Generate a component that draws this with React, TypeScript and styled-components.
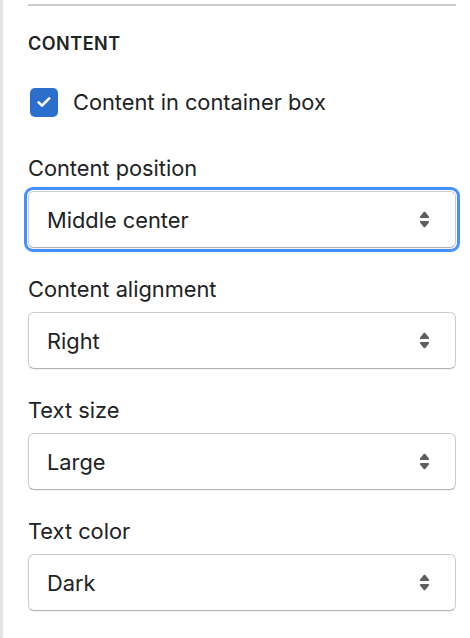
import React from 'react'
import styled, { createGlobalStyle } from 'styled-components'

const GlobalStyle = createGlobalStyle`
  html, body {
    margin: 0;
    padding: 0;
    background: #fff;
  }
  body {
    font-family: Inter, "Noto Sans", "Liberation Sans", sans-serif;
    color: #202223;
    -webkit-font-smoothing: antialiased;
  }
`

const Page = styled.div`
  display: flex;
  min-height: 638px;
`
const Strip = styled.div`
  width: 3px;
  flex-shrink: 0;
  background: #e4e5e7;
`
const Panel = styled.div`
  width: 428px;
  padding: 4px 0 0 25px;
  display: flex;
  flex-direction: column;
`
const Divider = styled.div`
  height: 2px;
  background: #c9cccf;
`
const Heading = styled.h2`
  margin: 28px 0 0;
  font-size: 18px;
  line-height: 20px;
  font-weight: 600;
  letter-spacing: 0.5px;
  text-transform: uppercase;
  color: #202223;
`
const CheckRow = styled.label`
  display: flex;
  align-items: center;
  gap: 15px;
  margin-top: 33px;
  height: 30px;
  padding-left: 2px;
  font-size: 21.8px;
  cursor: pointer;
`
const Box = styled.span<{ checked: boolean }>`
  width: 28px;
  height: 29px;
  border-radius: 5px;
  display: flex;
  align-items: center;
  justify-content: center;
  background: ${(p) => (p.checked ? '#2c6ecb' : '#fff')};
  border: ${(p) => (p.checked ? 'none' : '1px solid #8c9196')};
`
const Fields = styled.div`
  display: flex;
  flex-direction: column;
  gap: 29px;
  margin-top: 39px;
`
const Field = styled.div`
  display: flex;
  flex-direction: column;
  gap: 11px;
`
const Label = styled.div`
  font-size: 21.8px;
  line-height: 24px;
  color: #202223;
`
const Select = styled.div<{ focused?: boolean }>`
  position: relative;
  height: 57px;
  box-sizing: border-box;
  display: flex;
  align-items: center;
  justify-content: space-between;
  padding: 0 15px 0 18px;
  border: 1px solid #c9cccf;
  border-bottom-color: #aeb4b9;
  border-radius: 6px;
  background: #fff;
  box-shadow: 0 1px 0 rgba(22, 29, 37, 0.05);
  font-size: 21.8px;
  color: #202223;
  ${(p) =>
    p.focused &&
    `
    &::after {
      content: '';
      position: absolute;
      inset: -5px;
      border: 3px solid #458fff;
      border-radius: 9px;
      pointer-events: none;
    }
  `}
`

const Check = () => (
  <svg width="18" height="18" viewBox="0 0 18 18">
    <path
      d="M3.6 9.4l3.4 3.2 7.2-7.2"
      fill="none"
      stroke="#fff"
      strokeWidth="2.6"
      strokeLinecap="round"
      strokeLinejoin="round"
    />
  </svg>
)

const Arrows = () => (
  <svg width="31" height="31" viewBox="0 0 20 20" fill="#5c5f62">
    <path d="M7.676 9h4.648c.563 0 .879-.603.53-1.014l-2.323-2.746a.708.708 0 0 0-1.062 0l-2.324 2.746c-.347.411-.032 1.014.531 1.014Zm4.648 2h-4.648c-.563 0-.878.603-.53 1.014l2.323 2.746c.27.32.792.32 1.062 0l2.323-2.746c.349-.411.033-1.014-.53-1.014Z" />
  </svg>
)

const fields = [
  { label: 'Content position', value: 'Middle center', focused: true },
  { label: 'Content alignment', value: 'Right' },
  { label: 'Text size', value: 'Large' },
  { label: 'Text color', value: 'Dark' },
]

export default function App() {
  return (
    <>
      <GlobalStyle />
      <Page>
        <Strip />
        <Panel>
          <Divider />
          <Heading>Content</Heading>
          <CheckRow>
            <Box checked>
              <Check />
            </Box>
            Content in container box
          </CheckRow>
          <Fields>
            {fields.map((f) => (
              <Field key={f.label}>
                <Label>{f.label}</Label>
                <Select focused={f.focused}>
                  <span>{f.value}</span>
                  <Arrows />
                </Select>
              </Field>
            ))}
          </Fields>
        </Panel>
      </Page>
    </>
  )
}
